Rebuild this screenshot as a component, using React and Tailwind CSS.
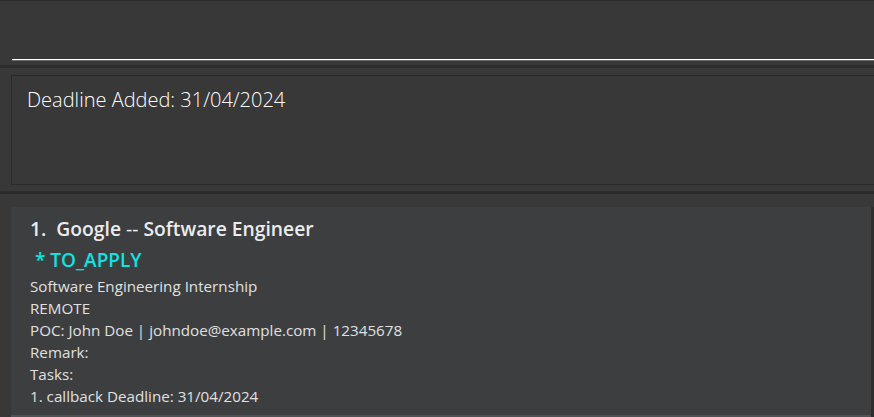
export default function App() {
  const lines = [
    'Software Engineering Internship',
    'REMOTE',
    'POC: John Doe | johndoe@example.com | 12345678',
    'Remark:',
    'Tasks:',
    '1. callback Deadline: 31/04/2024',
  ];

  return (
    <div className="w-[874px] h-[417px] overflow-hidden bg-[#383838] flex flex-col font-['Segoe_UI','Open_Sans',sans-serif]">
      {/* command box */}
      <div className="h-[65px] shrink-0 border-t border-[#2b2b2b] pl-[12px]">
        <div className="h-[59px] border-b border-white" />
        <div className="h-px bg-[#6a6a6a]" />
      </div>
      <div className="h-[3px] shrink-0 bg-[#2c2c2c]" />

      {/* result display */}
      <div className="h-[123px] shrink-0 pl-[11px] pt-[7px]">
        <div className="h-[110px] border border-r-0 border-[#2a2a2a] pl-[15px] pt-[10px]">
          <p className="text-[20px] font-light leading-[28px] text-white">Deadline Added: 31/04/2024</p>
        </div>
      </div>
      <div className="h-[3px] shrink-0 bg-[#2c2c2c]" />

      {/* list */}
      <div className="flex-1 pl-[11px] pt-[13px] flex">
        <div className="flex-1 flex flex-col">
          <div className="bg-[#3c3e3f] h-[208px] pl-[19px] pt-[8px]">
            <p className="text-[19.3px] font-semibold leading-[28px] text-[#ececec]">
              1.&nbsp; Google <span className="font-normal">--</span> Software Engineer
            </p>
            <p className="text-[19px] font-semibold leading-[26px] text-[#11e2e2] pl-[5px] mt-[4px]">* TO_APPLY</p>
            <div className="mt-[2px] text-[15.2px] leading-[22px] text-[#e0e0e0]">
              {lines.map((l) => (
                <p key={l}>{l}</p>
              ))}
            </div>
          </div>
          <div className="flex-1 bg-[#4d5354]" />
        </div>
        <div className="w-[3px] bg-[#2e2e2e]" />
      </div>
    </div>
  );
}
